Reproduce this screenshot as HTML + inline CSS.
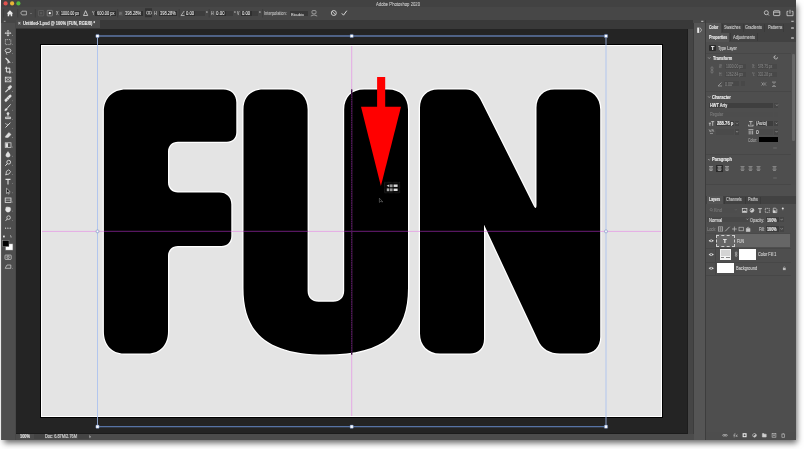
<!DOCTYPE html>
<html><head><meta charset="utf-8">
<style>
*{margin:0;padding:0;box-sizing:border-box}
html,body{width:804px;height:449px;overflow:hidden;background:#fff;font-family:"Liberation Sans",sans-serif}
.a{position:absolute}
.t{position:absolute;white-space:nowrap;will-change:transform}
svg{position:absolute;left:0;top:0}
</style></head><body>
<div class="a" style="left:1px;top:0;width:795px;height:440px;background:#474747;box-shadow:2px 4px 6px -1px rgba(0,0,0,.6)"></div>
<div class="a" style="left:1px;top:0px;width:795px;height:7.4px;background:#424242;"></div>
<div class="a" style="left:1px;top:6.9px;width:795px;height:0.6px;background:#383838;"></div>
<div class="t" style="left:376px;top:0.71px;font-size:108.0px;line-height:108.0px;color:#cfcfcf;font-weight:normal;-webkit-text-stroke:1.2px #cfcfcf;transform:scale(0.03897,0.05);transform-origin:0 0;">Adobe Photoshop 2020</div>
<div class="a" style="left:1px;top:7.4px;width:795px;height:12.1px;background:#474747;"></div>
<div class="a" style="left:16px;top:19.5px;width:677.6px;height:9.1px;background:#393939;"></div>
<div class="a" style="left:15.6px;top:20.1px;width:84.1px;height:8.4px;background:#4a4a4a;"></div>
<div class="t" style="left:18.2px;top:21.39px;font-size:92.0px;line-height:92.0px;color:#cfcfcf;font-weight:normal;-webkit-text-stroke:2.4px #cfcfcf;transform:scale(0.05000,0.05);transform-origin:0 0;">×</div>
<div class="t" style="left:23px;top:21.00px;font-size:96.0px;line-height:96.0px;color:#e6e6e6;font-weight:bold;-webkit-text-stroke:2.4px #e6e6e6;transform:scale(0.04159,0.05);transform-origin:0 0;">Untitled-1.psd @ 100% (FUN, RGB/8) *</div>
<div class="a" style="left:1px;top:19.5px;width:15px;height:420.5px;background:#4e4e4e;"></div>
<div class="a" style="left:1px;top:19.5px;width:0.7px;height:420.5px;background:#5a5a5a;"></div>
<div class="a" style="left:15.3px;top:19.5px;width:0.6px;height:420.5px;background:#474747;"></div>
<div class="a" style="left:1px;top:19.5px;width:14.5px;height:3.6px;background:#464646;"></div>
<div class="a" style="left:16px;top:28.6px;width:671.8px;height:405.1px;background:#242424;"></div>
<div class="a" style="left:16px;top:433.2px;width:671.8px;height:0.6px;background:#1c1c1c;"></div>
<div class="a" style="left:687.6px;top:28.6px;width:6px;height:411.4px;background:#454545;"></div>
<div class="a" style="left:686.7px;top:28.6px;width:0.9px;height:405px;background:#1d1d1d;"></div>
<div class="a" style="left:693.4px;top:28.6px;width:0.6px;height:411.4px;background:#3c3c3c;"></div>
<div class="a" style="left:16px;top:433.7px;width:677.6px;height:6.3px;background:#4c4c4c;"></div>
<div class="a" style="left:33.5px;top:434.4px;width:11px;height:5px;background:#444444;"></div>
<div class="a" style="left:77.5px;top:434.4px;width:11px;height:5px;background:#444444;"></div>
<div class="t" style="left:20px;top:434.49px;font-size:92.0px;line-height:92.0px;color:#e0e0e0;font-weight:bold;-webkit-text-stroke:2.4px #e0e0e0;transform:scale(0.04250,0.05);transform-origin:0 0;">100%</div>
<div class="t" style="left:45px;top:434.49px;font-size:92.0px;line-height:92.0px;color:#d6d6d6;font-weight:normal;-webkit-text-stroke:2.4px #d6d6d6;transform:scale(0.04257,0.05);transform-origin:0 0;">Doc: 6.87M/2.76M</div>
<div class="t" style="left:89px;top:433.06px;font-size:110.0px;line-height:110.0px;color:#cccccc;font-weight:normal;-webkit-text-stroke:2.4px #cccccc;transform:scale(0.05000,0.05);transform-origin:0 0;">&#x203A;</div>
<div class="a" style="left:693.6px;top:19.5px;width:11.6px;height:420.5px;background:#555555;"></div>
<div class="a" style="left:693.3px;top:19.5px;width:11.7px;height:3px;background:#484848;"></div>
<div class="a" style="left:693.8px;top:24.5px;width:10.7px;height:11px;background:#555555;"></div>
<div class="a" style="left:705.2px;top:19.5px;width:0.8px;height:420.5px;background:#3d3d3d;"></div>
<div class="a" style="left:706px;top:19.5px;width:90px;height:420.5px;background:#4e4e4e;"></div>
<div class="a" style="left:706px;top:19.5px;width:90px;height:3px;background:#484848;"></div>
<div class="a" style="left:706px;top:22.5px;width:90px;height:10px;background:#424242;"></div>
<div class="a" style="left:706.2px;top:22.5px;width:14.7px;height:10px;background:#535353;"></div>
<div class="a" style="left:721.7px;top:23.5px;width:0.6px;height:8px;background:#3a3a3a;"></div>
<div class="a" style="left:742.5px;top:23.5px;width:0.6px;height:8px;background:#3a3a3a;"></div>
<div class="a" style="left:764px;top:23.5px;width:0.6px;height:8px;background:#3a3a3a;"></div>
<div class="a" style="left:783.4px;top:23.5px;width:0.6px;height:8px;background:#3a3a3a;"></div>
<div class="t" style="left:708.7px;top:25.20px;font-size:96.0px;line-height:96.0px;color:#eeeeee;font-weight:bold;-webkit-text-stroke:2.4px #eeeeee;transform:scale(0.03710,0.05);transform-origin:0 0;">Color</div>
<div class="t" style="left:723.7px;top:25.20px;font-size:96.0px;line-height:96.0px;color:#c9c9c9;font-weight:normal;-webkit-text-stroke:2.4px #c9c9c9;transform:scale(0.03988,0.05);transform-origin:0 0;">Swatches</div>
<div class="t" style="left:745px;top:25.20px;font-size:96.0px;line-height:96.0px;color:#c9c9c9;font-weight:normal;-webkit-text-stroke:2.4px #c9c9c9;transform:scale(0.04085,0.05);transform-origin:0 0;">Gradients</div>
<div class="t" style="left:767.5px;top:25.20px;font-size:96.0px;line-height:96.0px;color:#c9c9c9;font-weight:normal;-webkit-text-stroke:2.4px #c9c9c9;transform:scale(0.04056,0.05);transform-origin:0 0;">Patterns</div>
<div class="a" style="left:706px;top:32.5px;width:90px;height:9.8px;background:#424242;"></div>
<div class="a" style="left:706.2px;top:33.3px;width:23.2px;height:9px;background:#535353;"></div>
<div class="a" style="left:729.6px;top:33.3px;width:0.6px;height:8px;background:#3a3a3a;"></div>
<div class="a" style="left:757px;top:33.3px;width:0.6px;height:8px;background:#3a3a3a;"></div>
<div class="t" style="left:708.7px;top:35.30px;font-size:96.0px;line-height:96.0px;color:#eeeeee;font-weight:bold;-webkit-text-stroke:2.4px #eeeeee;transform:scale(0.03854,0.05);transform-origin:0 0;">Properties</div>
<div class="t" style="left:732.5px;top:35.30px;font-size:96.0px;line-height:96.0px;color:#c9c9c9;font-weight:normal;-webkit-text-stroke:2.4px #c9c9c9;transform:scale(0.04184,0.05);transform-origin:0 0;">Adjustments</div>
<div class="a" style="left:790.8px;top:26.6px;width:3.2px;height:2px;background:#9a9a9a;border-radius:0.4px"></div>
<div class="a" style="left:790.8px;top:36.6px;width:3.2px;height:2px;background:#9a9a9a;border-radius:0.4px"></div>
<div class="a" style="left:790.8px;top:198.8px;width:3.2px;height:2px;background:#9a9a9a;border-radius:0.4px"></div>
<div class="a" style="left:709.3px;top:44.7px;width:6.7px;height:6px;background:#2c2c2c;border-radius:0.8px"></div>
<div class="t" style="left:710.6px;top:45.21px;font-size:108.0px;line-height:108.0px;color:#f0f0f0;font-weight:bold;-webkit-text-stroke:2.4px #f0f0f0;transform:scale(0.05000,0.05);transform-origin:0 0;">T</div>
<div class="t" style="left:718px;top:45.70px;font-size:96.0px;line-height:96.0px;color:#cfcfcf;font-weight:normal;-webkit-text-stroke:2.4px #cfcfcf;transform:scale(0.03958,0.05);transform-origin:0 0;">Type Layer</div>
<div class="a" style="left:706px;top:52.5px;width:85.5px;height:0.6px;background:#474747;"></div>
<div class="t" style="left:712.7px;top:55.70px;font-size:96.0px;line-height:96.0px;color:#eeeeee;font-weight:bold;-webkit-text-stroke:2.4px #eeeeee;transform:scale(0.04111,0.05);transform-origin:0 0;">Transform</div>
<div class="a" style="left:791.3px;top:53px;width:4.7px;height:131px;background:#4e4e4e;"></div>
<div class="a" style="left:792.3px;top:54px;width:2.7px;height:86.5px;background:#666666;border-radius:1.3px"></div>
<div class="t" style="left:718.7px;top:64.44px;font-size:90.0px;line-height:90.0px;color:#858585;font-weight:normal;-webkit-text-stroke:1.2px #858585;transform:scale(0.03046,0.05);transform-origin:0 0;">W:</div>
<div class="a" style="left:724.9px;top:64.3px;width:20.8px;height:4.7px;background:#484848;"></div>
<div class="t" style="left:725.8px;top:64.44px;font-size:90.0px;line-height:90.0px;color:#858585;font-weight:normal;-webkit-text-stroke:1.2px #858585;transform:scale(0.03817,0.05);transform-origin:0 0;">1000.00 px</div>
<div class="t" style="left:751.8px;top:64.44px;font-size:90.0px;line-height:90.0px;color:#858585;font-weight:normal;-webkit-text-stroke:1.2px #858585;transform:scale(0.03880,0.05);transform-origin:0 0;">X:</div>
<div class="a" style="left:757px;top:64.3px;width:20.3px;height:4.7px;background:#484848;"></div>
<div class="t" style="left:757.9px;top:64.44px;font-size:90.0px;line-height:90.0px;color:#858585;font-weight:normal;-webkit-text-stroke:1.2px #858585;transform:scale(0.03617,0.05);transform-origin:0 0;">578.75 px</div>
<div class="t" style="left:718.7px;top:72.44px;font-size:90.0px;line-height:90.0px;color:#858585;font-weight:normal;-webkit-text-stroke:1.2px #858585;transform:scale(0.03667,0.05);transform-origin:0 0;">H:</div>
<div class="a" style="left:724.9px;top:72.3px;width:20.8px;height:4.7px;background:#484848;"></div>
<div class="t" style="left:725.8px;top:72.44px;font-size:90.0px;line-height:90.0px;color:#858585;font-weight:normal;-webkit-text-stroke:1.2px #858585;transform:scale(0.03817,0.05);transform-origin:0 0;">1262.84 px</div>
<div class="t" style="left:751.8px;top:72.44px;font-size:90.0px;line-height:90.0px;color:#858585;font-weight:normal;-webkit-text-stroke:1.2px #858585;transform:scale(0.04121,0.05);transform-origin:0 0;">Y:</div>
<div class="a" style="left:757px;top:72.3px;width:20.3px;height:4.7px;background:#484848;"></div>
<div class="t" style="left:757.9px;top:72.44px;font-size:90.0px;line-height:90.0px;color:#858585;font-weight:normal;-webkit-text-stroke:1.2px #858585;transform:scale(0.03617,0.05);transform-origin:0 0;">302.28 px</div>
<div class="a" style="left:724.4px;top:81.3px;width:15.1px;height:5.2px;background:#484848;"></div>
<div class="t" style="left:725.3px;top:81.84px;font-size:90.0px;line-height:90.0px;color:#858585;font-weight:normal;-webkit-text-stroke:1.2px #858585;transform:scale(0.04025,0.05);transform-origin:0 0;">0.00°</div>
<div class="a" style="left:741.4px;top:81.3px;width:3.3px;height:5.2px;background:#484848;"></div>
<div class="a" style="left:706px;top:91px;width:85.3px;height:0.6px;background:#474747;"></div>
<div class="t" style="left:712.3px;top:94.70px;font-size:96.0px;line-height:96.0px;color:#eeeeee;font-weight:bold;-webkit-text-stroke:2.4px #eeeeee;transform:scale(0.04194,0.05);transform-origin:0 0;">Character</div>
<div class="a" style="left:708.7px;top:103.2px;width:64.3px;height:4.7px;background:#3f3f3f;"></div>
<div class="a" style="left:774.1px;top:103.2px;width:4.2px;height:4.7px;background:#464646;"></div>
<div class="t" style="left:709.7px;top:103.29px;font-size:92.0px;line-height:92.0px;color:#e8e8e8;font-weight:bold;-webkit-text-stroke:2.4px #e8e8e8;transform:scale(0.04162,0.05);transform-origin:0 0;">HWT Arty</div>
<div class="a" style="left:708.7px;top:111.5px;width:64.3px;height:5.3px;background:#4d4d4d;"></div>
<div class="a" style="left:774.1px;top:111.5px;width:4.2px;height:5.3px;background:#4d4d4d;"></div>
<div class="t" style="left:709.7px;top:111.89px;font-size:92.0px;line-height:92.0px;color:#7a7a7a;font-weight:normal;-webkit-text-stroke:2.4px #7a7a7a;transform:scale(0.04097,0.05);transform-origin:0 0;">Regular</div>
<div class="a" style="left:715.8px;top:121px;width:18.3px;height:5.2px;background:#3d3d3d;"></div>
<div class="a" style="left:734.9px;top:121px;width:3.9px;height:5.2px;background:#434343;"></div>
<div class="t" style="left:716.5px;top:121.39px;font-size:92.0px;line-height:92.0px;color:#eaeaea;font-weight:bold;-webkit-text-stroke:2.4px #eaeaea;transform:scale(0.04516,0.05);transform-origin:0 0;">288.76 p</div>
<div class="a" style="left:755.2px;top:120.8px;width:17.8px;height:5.2px;background:#3d3d3d;"></div>
<div class="a" style="left:774.1px;top:120.8px;width:4.2px;height:5.2px;background:#434343;"></div>
<div class="t" style="left:755.8px;top:121.19px;font-size:92.0px;line-height:92.0px;color:#dddddd;font-weight:normal;-webkit-text-stroke:2.4px #dddddd;transform:scale(0.04471,0.05);transform-origin:0 0;">(Auto)</div>
<div class="a" style="left:715.8px;top:129.4px;width:18.3px;height:5.2px;background:#4a4a4a;"></div>
<div class="a" style="left:734.9px;top:129.4px;width:3.9px;height:5.2px;background:#464646;"></div>
<div class="a" style="left:755.2px;top:129.4px;width:17.8px;height:5.2px;background:#4a4a4a;"></div>
<div class="a" style="left:774.1px;top:129.4px;width:4.2px;height:5.2px;background:#464646;"></div>
<div class="t" style="left:756.3px;top:129.79px;font-size:92.0px;line-height:92.0px;color:#dddddd;font-weight:normal;-webkit-text-stroke:2.4px #dddddd;transform:scale(0.05276,0.05);transform-origin:0 0;">0</div>
<div class="t" style="left:748.1px;top:137.59px;font-size:92.0px;line-height:92.0px;color:#9c9c9c;font-weight:normal;-webkit-text-stroke:2.4px #9c9c9c;transform:scale(0.03708,0.05);transform-origin:0 0;">Color:</div>
<div class="a" style="left:758.8px;top:136.9px;width:19.5px;height:5.3px;background:#000000;"></div>
<div class="a" style="left:772.6px;top:147.2px;width:4.8px;height:1.8px;background:#5c5c5c;border-radius:0.8px"></div>
<div class="a" style="left:706px;top:153.8px;width:85.3px;height:0.6px;background:#474747;"></div>
<div class="t" style="left:712.3px;top:157.40px;font-size:96.0px;line-height:96.0px;color:#eeeeee;font-weight:bold;-webkit-text-stroke:2.4px #eeeeee;transform:scale(0.04212,0.05);transform-origin:0 0;">Paragraph</div>
<div class="a" style="left:716.4px;top:165px;width:6.2px;height:6.8px;background:#383838;border-radius:0.6px;border:0.5px solid #2a2a2a"></div>
<div class="a" style="left:772.6px;top:177.2px;width:4.8px;height:1.8px;background:#5c5c5c;border-radius:0.8px"></div>
<div class="a" style="left:706px;top:184.2px;width:85.3px;height:0.6px;background:#474747;"></div>
<div class="a" style="left:706px;top:184.8px;width:90px;height:11px;background:#4f4f4f;"></div>
<div class="a" style="left:706px;top:195.9px;width:90px;height:8.4px;background:#424242;"></div>
<div class="a" style="left:706.5px;top:195.9px;width:16.6px;height:8.4px;background:#535353;"></div>
<div class="a" style="left:724.1px;top:196.6px;width:0.6px;height:7px;background:#3a3a3a;"></div>
<div class="a" style="left:744.7px;top:196.6px;width:0.6px;height:7px;background:#3a3a3a;"></div>
<div class="a" style="left:760.4px;top:196.6px;width:0.6px;height:7px;background:#3a3a3a;"></div>
<div class="t" style="left:708.9px;top:197.30px;font-size:96.0px;line-height:96.0px;color:#eeeeee;font-weight:bold;-webkit-text-stroke:2.4px #eeeeee;transform:scale(0.03650,0.05);transform-origin:0 0;">Layers</div>
<div class="t" style="left:726px;top:197.30px;font-size:96.0px;line-height:96.0px;color:#c9c9c9;font-weight:normal;-webkit-text-stroke:2.4px #c9c9c9;transform:scale(0.03871,0.05);transform-origin:0 0;">Channels</div>
<div class="t" style="left:747.6px;top:197.30px;font-size:96.0px;line-height:96.0px;color:#c9c9c9;font-weight:normal;-webkit-text-stroke:2.4px #c9c9c9;transform:scale(0.03992,0.05);transform-origin:0 0;">Paths</div>
<div class="a" style="left:708px;top:207.7px;width:29.3px;height:5.3px;background:#4d4d4d;"></div>
<div class="t" style="left:713.8px;top:208.14px;font-size:90.0px;line-height:90.0px;color:#7a7a7a;font-weight:normal;-webkit-text-stroke:2.4px #7a7a7a;transform:scale(0.04330,0.05);transform-origin:0 0;">Kind</div>
<div class="a" style="left:707.4px;top:217px;width:41.2px;height:5.4px;background:#484848;"></div>
<div class="t" style="left:708.9px;top:217.59px;font-size:92.0px;line-height:92.0px;color:#e0e0e0;font-weight:normal;-webkit-text-stroke:2.4px #e0e0e0;transform:scale(0.04452,0.05);transform-origin:0 0;">Normal</div>
<div class="t" style="left:749.9px;top:217.79px;font-size:92.0px;line-height:92.0px;color:#c4c4c4;font-weight:normal;-webkit-text-stroke:2.4px #c4c4c4;transform:scale(0.04208,0.05);transform-origin:0 0;">Opacity:</div>
<div class="a" style="left:766px;top:217.2px;width:12.8px;height:5.3px;background:#3c3c3c;"></div>
<div class="t" style="left:766.7px;top:217.59px;font-size:92.0px;line-height:92.0px;color:#f0f0f0;font-weight:bold;-webkit-text-stroke:2.4px #f0f0f0;transform:scale(0.04122,0.05);transform-origin:0 0;">100%</div>
<div class="a" style="left:779.8px;top:217.2px;width:3.9px;height:5.3px;background:#454545;"></div>
<div class="t" style="left:707.4px;top:226.59px;font-size:92.0px;line-height:92.0px;color:#808080;font-weight:normal;-webkit-text-stroke:2.4px #808080;transform:scale(0.04229,0.05);transform-origin:0 0;">Lock:</div>
<div class="t" style="left:758.7px;top:226.79px;font-size:92.0px;line-height:92.0px;color:#c4c4c4;font-weight:normal;-webkit-text-stroke:2.4px #c4c4c4;transform:scale(0.03774,0.05);transform-origin:0 0;">Fill:</div>
<div class="a" style="left:766px;top:226.4px;width:12.8px;height:5.3px;background:#3c3c3c;"></div>
<div class="t" style="left:766.7px;top:226.79px;font-size:92.0px;line-height:92.0px;color:#f0f0f0;font-weight:bold;-webkit-text-stroke:2.4px #f0f0f0;transform:scale(0.04122,0.05);transform-origin:0 0;">100%</div>
<div class="a" style="left:779.8px;top:226.4px;width:3.9px;height:5.3px;background:#454545;"></div>
<div class="a" style="left:706px;top:233.1px;width:85px;height:0.5px;background:#4a4a4a;"></div>
<div class="a" style="left:715.3px;top:234px;width:75px;height:12.8px;background:#666666;"></div>
<div class="a" style="left:716.3px;top:234.6px;width:18.3px;height:12.2px;background:transparent;border:0.7px dashed #d0d0d0"></div>
<div class="t" style="left:722.7px;top:237.72px;font-size:120.0px;line-height:120.0px;color:#eeeeee;font-weight:bold;-webkit-text-stroke:2.4px #eeeeee;transform:scale(0.05000,0.05);transform-origin:0 0;">T</div>
<div class="t" style="left:736.7px;top:239.19px;font-size:92.0px;line-height:92.0px;color:#d8d8d8;font-weight:normal;-webkit-text-stroke:2.4px #d8d8d8;transform:scale(0.03755,0.05);transform-origin:0 0;">FUN</div>
<div class="a" style="left:706px;top:248.2px;width:85px;height:0.5px;background:#474747;"></div>
<div class="a" style="left:720px;top:249px;width:10.6px;height:10.6px;background:#f4f4f4;"></div>
<div class="a" style="left:720.8px;top:249.8px;width:9px;height:5.8px;background:#d4d4d4;"></div>
<div class="a" style="left:720.8px;top:257.2px;width:3.6px;height:1px;background:#888888;"></div>
<div class="a" style="left:726.2px;top:257.2px;width:3.6px;height:1px;background:#888888;"></div>
<div class="a" style="left:738.7px;top:249.4px;width:17.4px;height:10.7px;background:#ffffff;"></div>
<div class="t" style="left:758.1px;top:252.49px;font-size:92.0px;line-height:92.0px;color:#cfcfcf;font-weight:normal;-webkit-text-stroke:2.4px #cfcfcf;transform:scale(0.04208,0.05);transform-origin:0 0;">Color Fill 1</div>
<div class="a" style="left:706px;top:261.6px;width:85px;height:0.5px;background:#474747;"></div>
<div class="a" style="left:717px;top:262.7px;width:17.1px;height:10.8px;background:#ffffff;"></div>
<div class="t" style="left:736.3px;top:266.09px;font-size:92.0px;line-height:92.0px;color:#cfcfcf;font-weight:normal;-webkit-text-stroke:2.4px #cfcfcf;transform:scale(0.04297,0.05);transform-origin:0 0;">Background</div>
<div class="a" style="left:715.3px;top:233.6px;width:0.5px;height:41px;background:#474747;"></div>
<div class="a" style="left:706px;top:274.6px;width:85px;height:0.5px;background:#474747;"></div>
<div class="a" style="left:706px;top:432px;width:90px;height:8px;background:#4d4d4d;"></div>
<div class="a" style="left:791px;top:204.5px;width:5px;height:227.5px;background:#4e4e4e;"></div>
<div class="t" style="left:55.5px;top:11.39px;font-size:92.0px;line-height:92.0px;color:#c0c0c0;font-weight:normal;-webkit-text-stroke:2.4px #c0c0c0;transform:scale(0.04073,0.05);transform-origin:0 0;">X</div>
<div class="a" style="left:60.1px;top:11.3px;width:19.800000000000004px;height:4.7px;background:#2f2f2f;"></div>
<div class="t" style="left:60.8px;top:11.39px;font-size:92.0px;line-height:92.0px;color:#f0f0f0;font-weight:normal;-webkit-text-stroke:1.0px #f0f0f0;transform:scale(0.03997,0.05);transform-origin:0 0;">1000.00 px</div>
<div class="t" style="left:91.6px;top:11.39px;font-size:92.0px;line-height:92.0px;color:#c0c0c0;font-weight:normal;-webkit-text-stroke:2.4px #c0c0c0;transform:scale(0.04073,0.05);transform-origin:0 0;">Y</div>
<div class="a" style="left:95.1px;top:11.3px;width:20.900000000000006px;height:4.7px;background:#2f2f2f;"></div>
<div class="t" style="left:96.5px;top:11.39px;font-size:92.0px;line-height:92.0px;color:#f0f0f0;font-weight:normal;-webkit-text-stroke:1.0px #f0f0f0;transform:scale(0.04330,0.05);transform-origin:0 0;">600.00 px</div>
<div class="a" style="left:119px;top:11.3px;width:3.7px;height:4.7px;background:#4e4e4e;"></div>
<div class="t" style="left:119.3px;top:11.49px;font-size:88.0px;line-height:88.0px;color:#8a8a8a;font-weight:normal;-webkit-text-stroke:2.4px #8a8a8a;transform:scale(0.03116,0.05);transform-origin:0 0;">W:</div>
<div class="a" style="left:124.6px;top:11.3px;width:18.30000000000001px;height:4.7px;background:#2f2f2f;"></div>
<div class="t" style="left:125.3px;top:11.39px;font-size:92.0px;line-height:92.0px;color:#f0f0f0;font-weight:normal;-webkit-text-stroke:1.0px #f0f0f0;transform:scale(0.04405,0.05);transform-origin:0 0;">398.28%</div>
<div class="t" style="left:154px;top:11.39px;font-size:92.0px;line-height:92.0px;color:#c0c0c0;font-weight:normal;-webkit-text-stroke:2.4px #c0c0c0;transform:scale(0.04213,0.05);transform-origin:0 0;">H</div>
<div class="a" style="left:159px;top:11.3px;width:17.900000000000006px;height:4.7px;background:#2f2f2f;"></div>
<div class="t" style="left:160px;top:11.39px;font-size:92.0px;line-height:92.0px;color:#f0f0f0;font-weight:normal;-webkit-text-stroke:1.0px #f0f0f0;transform:scale(0.04323,0.05);transform-origin:0 0;">398.28%</div>
<div class="a" style="left:185px;top:11.3px;width:19.5px;height:4.7px;background:#2f2f2f;"></div>
<div class="a" style="left:195px;top:11.3px;width:9.5px;height:4.7px;background:#3d3d3d;"></div>
<div class="t" style="left:186.2px;top:11.39px;font-size:92.0px;line-height:92.0px;color:#f0f0f0;font-weight:normal;-webkit-text-stroke:1.0px #f0f0f0;transform:scale(0.04579,0.05);transform-origin:0 0;">0.00</div>
<div class="t" style="left:205.6px;top:11.19px;font-size:92.0px;line-height:92.0px;color:#bbbbbb;font-weight:normal;-webkit-text-stroke:2.4px #bbbbbb;transform:scale(0.05000,0.05);transform-origin:0 0;">°</div>
<div class="t" style="left:211.1px;top:11.39px;font-size:92.0px;line-height:92.0px;color:#c0c0c0;font-weight:normal;-webkit-text-stroke:2.4px #c0c0c0;transform:scale(0.03913,0.05);transform-origin:0 0;">H</div>
<div class="a" style="left:215.7px;top:11.3px;width:16.80000000000001px;height:4.7px;background:#2f2f2f;"></div>
<div class="a" style="left:226px;top:11.3px;width:6.5px;height:4.7px;background:#3d3d3d;"></div>
<div class="t" style="left:216.4px;top:11.39px;font-size:92.0px;line-height:92.0px;color:#f0f0f0;font-weight:normal;-webkit-text-stroke:1.0px #f0f0f0;transform:scale(0.04803,0.05);transform-origin:0 0;">0.00</div>
<div class="t" style="left:233.6px;top:11.19px;font-size:92.0px;line-height:92.0px;color:#bbbbbb;font-weight:normal;-webkit-text-stroke:2.4px #bbbbbb;transform:scale(0.05000,0.05);transform-origin:0 0;">°</div>
<div class="t" style="left:237.3px;top:11.39px;font-size:92.0px;line-height:92.0px;color:#c0c0c0;font-weight:normal;-webkit-text-stroke:2.4px #c0c0c0;transform:scale(0.03910,0.05);transform-origin:0 0;">V</div>
<div class="a" style="left:241px;top:11.3px;width:17.19999999999999px;height:4.7px;background:#2f2f2f;"></div>
<div class="a" style="left:251.5px;top:11.3px;width:6.699999999999989px;height:4.7px;background:#3d3d3d;"></div>
<div class="t" style="left:242.2px;top:11.39px;font-size:92.0px;line-height:92.0px;color:#f0f0f0;font-weight:normal;-webkit-text-stroke:1.0px #f0f0f0;transform:scale(0.04579,0.05);transform-origin:0 0;">0.00</div>
<div class="t" style="left:259.2px;top:11.19px;font-size:92.0px;line-height:92.0px;color:#bbbbbb;font-weight:normal;-webkit-text-stroke:2.4px #bbbbbb;transform:scale(0.05000,0.05);transform-origin:0 0;">°</div>
<div class="t" style="left:263.7px;top:11.49px;font-size:92.0px;line-height:92.0px;color:#b8b8b8;font-weight:normal;-webkit-text-stroke:2.4px #b8b8b8;transform:scale(0.04286,0.05);transform-origin:0 0;">Interpolation:</div>
<div class="a" style="left:290.2px;top:11.1px;width:17.6px;height:5.2px;background:#383838;"></div>
<div class="t" style="left:291px;top:11.59px;font-size:88.0px;line-height:88.0px;color:#d0d0d0;font-weight:normal;-webkit-text-stroke:2.4px #d0d0d0;transform:scale(0.04583,0.05);transform-origin:0 0;">Bicubic</div>
<svg width="804" height="449" viewBox="0 0 804 449">
<circle cx="5.6" cy="3.4" r="2.1" fill="#e0534f"/><circle cx="12.1" cy="3.4" r="2.1" fill="#e9b536"/><circle cx="18.4" cy="3.4" r="2.1" fill="#55b93f"/>
<g fill="none" stroke="#3a3a3a" stroke-width="0.7"><line x1="3.6" y1="9" x2="3.6" y2="17.5"/><line x1="17.7" y1="9" x2="17.7" y2="17.5"/><line x1="35.3" y1="9" x2="35.3" y2="17.5"/><line x1="117.6" y1="9" x2="117.6" y2="17.5"/><line x1="179.2" y1="9" x2="179.2" y2="17.5"/><line x1="209.2" y1="9" x2="209.2" y2="17.5"/><line x1="262.6" y1="9" x2="262.6" y2="17.5"/></g>
<path d="M6.7,13.4 L9.95,10.2 L13.2,13.4 L12.2,13.4 L12.2,16.2 L10.7,16.2 L10.7,14.5 L9.2,14.5 L9.2,16.2 L7.7,16.2 L7.7,13.4 Z" fill="#e8e8e8"/>
<path d="M20.7,13 L22,11.2 L26.4,11.2 L26.4,14.9 L22,14.9 Z" fill="none" stroke="#d0d0d0" stroke-width="0.7"/><line x1="30" y1="13.5" x2="32" y2="13.5" stroke="#888" stroke-width="0.6"/>
<rect x="38.4" y="10.5" width="5.4" height="5.4" rx="0.8" fill="none" stroke="#6a6a6a" stroke-width="0.6"/><rect x="40" y="12.1" width="2.2" height="2.2" fill="#5a5a5a"/>
<rect x="47.2" y="10.4" width="5.2" height="5.5" rx="0.5" fill="none" stroke="#9a9a9a" stroke-width="0.6"/><circle cx="49.8" cy="13.2" r="1.1" fill="#ffffff"/>
<path d="M83.5,15.5 L85.6,10.7 L87.7,15.5 Z" fill="none" stroke="#dcdcdc" stroke-width="0.8"/>
<rect x="145" y="8.2" width="7" height="9" fill="#333333"/><path d="M146.6,12.8 a1.3,1.1 0 1,1 2.4,0 a1.3,1.1 0 1,0 2.4,0 a1.3,1.1 0 1,0 -2.4,0 a1.3,1.1 0 1,1 -2.4,0" fill="none" stroke="#cfcfcf" stroke-width="0.6"/>
<path d="M181,15.5 L184.2,11 M181,15.5 L184.5,15.5" stroke="#cfcfcf" stroke-width="0.7" fill="none"/>
<circle cx="333.8" cy="13" r="2.5" fill="none" stroke="#e6e6e6" stroke-width="0.8"/><line x1="332.1" y1="11.3" x2="335.5" y2="14.7" stroke="#e6e6e6" stroke-width="0.8"/>
<path d="M341.8,13.3 L343.5,15.2 L346.8,10.7" fill="none" stroke="#e8e8e8" stroke-width="0.9"/>
<g stroke="#cfcfcf" stroke-width="0.6" fill="none"><rect x="312" y="10.6" width="4" height="3.2" rx="0.8"/><path d="M310.8,16 Q314,13.8 317.2,16"/></g>
<g stroke="#d6d6d6" stroke-width="0.8" fill="none"><circle cx="766.3" cy="12.7" r="2"/><line x1="767.7" y1="14.1" x2="769" y2="15.5"/><rect x="773.6" y="10.8" width="6.2" height="4.8" rx="0.6"/><line x1="773.6" y1="12.2" x2="779.8" y2="12.2"/><path d="M788.4,11.3 L787,11.3 L787,15.7 L793,15.7 L793,11.3 L791.6,11.3"/><line x1="790" y1="9.8" x2="790" y2="13.6"/></g>
</svg>
<svg width="804" height="449" viewBox="0 0 804 449">
<g fill="none" stroke="#e0e0e0" stroke-width="0.8">
<line x1="3.8" y1="21.3" x2="5.6" y2="21.3" stroke="#bbb"/>
<path d="M8,30.5 L8,35.9 M5.3,33.2 L10.7,33.2" stroke-width="0.9"/>
<path d="M7,31.3 L8,30.3 L9,31.3 M7,35.1 L8,36.1 L9,35.1 M6.1,32.2 L5.1,33.2 L6.1,34.2 M9.9,32.2 L10.9,33.2 L9.9,34.2" stroke-width="0.7"/>
<rect x="5.4" y="39.6" width="5.4" height="5" stroke-dasharray="1,0.8" stroke-width="0.7"/>
<ellipse cx="8" cy="50.6" rx="2.9" ry="2" stroke-width="0.8"/><path d="M6.5,52.4 Q6,54 7,54.6"/>
<path d="M5.6,58 L8,60.5" stroke-width="1.3"/><path d="M7.8,59.6 L10.3,62.6 L8.6,62.4 L7.8,63.5 Z" fill="#e0e0e0" stroke-width="0.4"/>
<path d="M6.4,66.7 L6.4,72 L11.2,72 M4.9,68.2 L9.8,68.2 L9.8,73.6" stroke-width="1"/>
<rect x="5.3" y="77.2" width="5.6" height="4.6" stroke-width="0.8"/><path d="M5.3,77.2 L10.9,81.8 M10.9,77.2 L5.3,81.8" stroke-width="0.6"/>
<path d="M5.4,92.2 L9,88.6" stroke-width="1.2"/><path d="M7.8,87.6 L10.2,85.4 Q11.8,85.6 11.6,87 L9.6,89.6 Z" fill="#e0e0e0" stroke-width="0.6"/>
<path d="M5,99.6 L9.6,95 Q10.6,94.4 11.2,95.4 Q11.6,96.2 11,96.8 L6.4,101.4 Q5.6,102 5,101.2 Q4.5,100.4 5,99.6 Z" fill="#e6e6e6" stroke-width="0.4"/><path d="M6.6,98.6 L9,101 M8.2,97 L10.2,99" stroke="#4e4e4e" stroke-width="0.35"/>
<path d="M6,109.6 L10.6,104.4" stroke-width="1"/><path d="M4.8,110.8 Q4.6,108.8 6.2,108.4 Q7.4,108.6 7.2,109.6 Q6.6,110.8 4.8,110.8 Z" fill="#e6e6e6" stroke-width="0.4"/>
<path d="M8,113.2 L8,116.5 M5.5,117.2 L10.5,117.2 L10.5,118.6 L5.5,118.6 Z" stroke-width="0.9"/><circle cx="8" cy="113.6" r="1" fill="#e0e0e0"/>
<path d="M5.5,127.5 L10.4,122.7" stroke-width="1"/><path d="M5.2,123.4 Q6.2,124.5 7.8,124.4" stroke-width="0.7"/>
<path d="M5.4,136.5 L8.8,132.6 L11,134.4 L8.2,137.4 L5.6,137.4 Z" fill="#e0e0e0" stroke-width="0.5"/>
<rect x="5.2" y="142.8" width="5.8" height="4.6" stroke-width="0.7"/><rect x="5.6" y="143.2" width="2.4" height="3.8" fill="#e0e0e0" stroke="none"/>
<path d="M8,151.6 Q10.4,154.4 10.2,155.4 Q10,157.2 8,157.2 Q6,157.2 5.8,155.4 Q5.6,154.4 8,151.6 Z" fill="#e0e0e0" stroke-width="0.4"/>
<circle cx="8.7" cy="162.2" r="1.9" stroke-width="0.9"/><path d="M7.4,163.5 L5.3,165.8" stroke-width="1"/>
<path d="M6,175 L6.4,171.4 L8.8,169.8 L10.6,171.6 L9,174 L5.6,174.8 Z" stroke-width="0.8"/>
<path d="M5.5,179.4 L10.5,179.4 M8,179.4 L8,184.4" stroke-width="1.1"/>
<path d="M6.5,188.2 L10.2,191.8 L8.4,192 L9.2,193.8 L8.4,194.1 L7.6,192.4 L6.5,193.5 Z" fill="#1a1a1a" stroke-width="0.6"/>
<rect x="5.2" y="198" width="5.8" height="4.4" stroke-width="0.8"/><line x1="5.2" y1="200.2" x2="11" y2="200.2" stroke-width="0.5"/>
<path d="M5.8,208.6 L5.8,207.6 Q6.4,206.6 7.2,207.4 Q7.6,206.4 8.6,207.2 Q9.4,206.6 9.8,207.6 Q10.6,207.6 10.6,208.6 L10.6,210.2 Q10,212.2 8,212.2 Q6.4,212.2 5.4,210 Z" fill="#e6e6e6" stroke-width="0.4"/>
<circle cx="8.6" cy="217.6" r="1.8" stroke-width="0.8"/><line x1="7.3" y1="219" x2="5.6" y2="220.8" stroke-width="1"/>
<g fill="#e0e0e0" stroke="none"><circle cx="5.6" cy="228.2" r="0.6"/><circle cx="7.9" cy="228.2" r="0.6"/><circle cx="10.2" cy="228.2" r="0.6"/></g>
<rect x="3" y="235.6" width="1.8" height="1.8" fill="#e0e0e0" stroke="none"/><path d="M10,235.3 Q11.3,235.6 11.1,237.6" stroke-width="0.6"/>
</g>
<rect x="5.6" y="243.9" width="7.3" height="6.2" fill="#ffffff" stroke="#777" stroke-width="0.4"/>
<rect x="2.6" y="240.6" width="6.4" height="6.1" fill="#000000" stroke="#999" stroke-width="0.5"/>
<g fill="none" stroke="#d8d8d8" stroke-width="0.7"><rect x="5" y="255.1" width="6.2" height="4.3" rx="0.5"/><circle cx="8.1" cy="257.2" r="1.2"/>
<path d="M5.2,268.3 L7,265 L10.8,265 L10.8,268.3 Z" stroke-width="0.7"/></g>
<circle cx="12.4" cy="35.5" r="0.4" fill="#bbbbbb"/>
<circle cx="12.4" cy="44.6" r="0.4" fill="#bbbbbb"/>
<circle cx="12.4" cy="53.6" r="0.4" fill="#bbbbbb"/>
<circle cx="12.4" cy="62.6" r="0.4" fill="#bbbbbb"/>
<circle cx="12.4" cy="72.2" r="0.4" fill="#bbbbbb"/>
<circle cx="12.4" cy="91.5" r="0.4" fill="#bbbbbb"/>
<circle cx="12.4" cy="100.8" r="0.4" fill="#bbbbbb"/>
<circle cx="12.4" cy="110.2" r="0.4" fill="#bbbbbb"/>
<circle cx="12.4" cy="119.3" r="0.4" fill="#bbbbbb"/>
<circle cx="12.4" cy="128.4" r="0.4" fill="#bbbbbb"/>
<circle cx="12.4" cy="137.5" r="0.4" fill="#bbbbbb"/>
<circle cx="12.4" cy="147" r="0.4" fill="#bbbbbb"/>
<circle cx="12.4" cy="156.2" r="0.4" fill="#bbbbbb"/>
<circle cx="12.4" cy="165.2" r="0.4" fill="#bbbbbb"/>
<circle cx="12.4" cy="174.4" r="0.4" fill="#bbbbbb"/>
<circle cx="12.4" cy="183.7" r="0.4" fill="#bbbbbb"/>
<circle cx="12.4" cy="192.8" r="0.4" fill="#bbbbbb"/>
<circle cx="12.4" cy="202" r="0.4" fill="#bbbbbb"/>
<circle cx="12.4" cy="211.1" r="0.4" fill="#bbbbbb"/>
<circle cx="12.4" cy="220.3" r="0.4" fill="#bbbbbb"/>
<circle cx="12.4" cy="268.4" r="0.4" fill="#bbbbbb"/>
</svg>
<svg width="804" height="449" viewBox="0 0 804 449">
<rect x="40" y="44" width="623" height="374" fill="#000"/><rect x="41" y="45" width="621" height="372" fill="#fff"/><rect x="42" y="46" width="619" height="370" fill="#e4e4e4"/>
<g fill="#000" stroke="#fff" stroke-width="2.5" paint-order="stroke"><path d="M103.9,111.5 C103.9,98.3 112.7,89.5 125.9,89.5 L223.3,89.5 C231.1,89.5 236.3,94.7 236.3,102.5 L236.3,132.2 C236.3,137.9 232.5,141.7 226.8,141.7 L178.0,141.7 C172.0,141.7 168.0,145.7 168.0,151.7 L168.0,182.5 C168.0,188.5 172.0,192.5 178.0,192.5 L219.3,192.5 C226.5,192.5 231.3,197.3 231.3,204.5 L231.3,236.0 C231.3,242.0 227.3,246.0 221.3,246.0 L178.0,246.0 C172.0,246.0 168.0,250.0 168.0,256.0 L168.0,331.5 C168.0,344.7 160.0,353.5 148.0,353.5 L123.9,353.5 C111.9,353.5 103.9,344.7 103.9,331.5 Z"/><path d="M243.5,109.5 C243.5,97.1 251.1,89.5 263.5,89.5 L287.6,89.5 C300.0,89.5 307.6,97.1 307.6,109.5 L307.6,290.8 C307.6,297.6 311.8,301.8 318.6,301.8 L333.2,301.8 C340.0,301.8 344.2,297.6 344.2,290.8 L344.2,109.5 C344.2,97.1 351.8,89.5 364.2,89.5 L388.0,89.5 C400.4,89.5 408.0,97.1 408.0,109.5 L408.0,288 C408.0,332 385.5,354.5 325.75,354.5 C266,354.5 243.5,332 243.5,288 Z"/><path d="M420,107.5 C420,96.7 427.2,89.5 438,89.5 L466,89.5 C473,89.5 478,94 481.8,102.3 L533.5,205.5 C534.2,207 535,208 535.5,208 C536.2,208 536.5,207 536.5,205 L536.5,107.5 C536.5,96.7 543.7,89.5 554.5,89.5 L580.2,89.5 C592.2,89.5 600.2,97.5 600.2,109.5 L600.2,337 C600.2,347 593.8,353.5 584,353.5 L560,353.5 C550,353.5 542,349 538,340 L484.9,226.5 C484.6,225.5 484.3,225 484,225.5 L484,339 C484,347.9 478.4,353.5 470,353.5 L440,353.5 C428,353.5 420,345.5 420,333.5 Z"/></g>
<line x1="42" y1="231.4" x2="661" y2="231.4" stroke="#e592e5" stroke-width="0.7"/>
<line x1="351.7" y1="46" x2="351.7" y2="416" stroke="#e592e5" stroke-width="0.7"/>
<line x1="351.7" y1="89.5" x2="351.7" y2="354.5" stroke="#000" stroke-width="1.2"/><line x1="351.7" y1="89.5" x2="351.7" y2="354.5" stroke="#6c1c78" stroke-width="0.9" stroke-dasharray="1.7,0.6"/>
<line x1="104.2" y1="231.4" x2="231" y2="231.4" stroke="#000" stroke-width="1.3"/><line x1="104.2" y1="231.4" x2="231" y2="231.4" stroke="#6c1c78" stroke-width="0.9"/><line x1="243.8" y1="231.4" x2="307.3" y2="231.4" stroke="#000" stroke-width="1.3"/><line x1="243.8" y1="231.4" x2="307.3" y2="231.4" stroke="#6c1c78" stroke-width="0.9"/><line x1="344.5" y1="231.4" x2="407.7" y2="231.4" stroke="#000" stroke-width="1.3"/><line x1="344.5" y1="231.4" x2="407.7" y2="231.4" stroke="#6c1c78" stroke-width="0.9"/><line x1="420.3" y1="231.4" x2="483.7" y2="231.4" stroke="#000" stroke-width="1.3"/><line x1="420.3" y1="231.4" x2="483.7" y2="231.4" stroke="#6c1c78" stroke-width="0.9"/><line x1="487.8" y1="231.4" x2="599.9" y2="231.4" stroke="#000" stroke-width="1.3"/><line x1="487.8" y1="231.4" x2="599.9" y2="231.4" stroke="#6c1c78" stroke-width="0.9"/>
<rect x="97.5" y="36" width="508.5" height="390.7" fill="none" stroke="#a6bff0" stroke-width="0.8"/>
<line x1="97.5" y1="36" x2="606" y2="36" stroke="#43639e" stroke-width="0.8"/><line x1="97.5" y1="426.7" x2="606" y2="426.7" stroke="#43639e" stroke-width="0.8"/>

<rect x="95.9" y="34.4" width="3.2" height="3.2" rx="0.6" fill="#fff" stroke="#5a7ab8" stroke-width="0.5"/>
<rect x="350.09999999999997" y="34.4" width="3.2" height="3.2" rx="0.6" fill="#fff" stroke="#5a7ab8" stroke-width="0.5"/>
<rect x="604.4" y="34.4" width="3.2" height="3.2" rx="0.6" fill="#fff" stroke="#5a7ab8" stroke-width="0.5"/>
<rect x="96.2" y="230.1" width="2.6" height="2.6" rx="0.6" fill="#fff" stroke="#5a7ab8" stroke-width="0.5"/>
<rect x="604.7" y="230.1" width="2.6" height="2.6" rx="0.6" fill="#fff" stroke="#5a7ab8" stroke-width="0.5"/>
<rect x="95.9" y="425.09999999999997" width="3.2" height="3.2" rx="0.6" fill="#fff" stroke="#5a7ab8" stroke-width="0.5"/>
<rect x="350.09999999999997" y="425.09999999999997" width="3.2" height="3.2" rx="0.6" fill="#fff" stroke="#5a7ab8" stroke-width="0.5"/>
<rect x="604.4" y="425.09999999999997" width="3.2" height="3.2" rx="0.6" fill="#fff" stroke="#5a7ab8" stroke-width="0.5"/>
<rect x="377.1" y="77" width="8.1" height="30.5" fill="#ff0000"/><polygon points="361,106.8 401,106.8 380.9,185.9" fill="#ff0000"/>
<rect x="384.5" y="182.3" width="15.2" height="10.6" fill="#0a0a0a" stroke="#5a5a5a" stroke-width="0.45" stroke-dasharray="0.5,0.7"/>
<g fill="#cfcfcf"><path d="M386.6,185.8 L389.2,184.6 L389.2,187 Z"/><rect x="389.8" y="184.4" width="2.8" height="2.8" fill="#9a9a9a"/><rect x="393.6" y="184.5" width="4" height="2.4" fill="#dcdcdc"/><rect x="386.8" y="188.4" width="2.4" height="2.8" fill="#aaaaaa"/><rect x="389.8" y="188.4" width="2.8" height="2.8" fill="#9a9a9a"/><rect x="393.6" y="188.6" width="4" height="2.4" fill="#dcdcdc"/></g>
<path d="M379.4,198.2 L379.4,202.4 L380.5,201.5 L382.8,201.9 Z" fill="none" stroke="#888" stroke-width="0.5"/>
</svg>
<svg width="804" height="449" viewBox="0 0 804 449">
<g fill="none" stroke="#d0d0d0" stroke-width="0.6">
<rect x="697.2" y="27.6" width="2" height="5.3" fill="#e8e8e8" stroke="none"/><path d="M700,27.6 L701.6,30 L700,32.4" stroke-width="0.7"/>
<line x1="701.2" y1="21.3" x2="703.4" y2="21.3" stroke="#d8d8d8" stroke-width="0.9"/><line x1="791.3" y1="21.3" x2="793.7" y2="21.3" stroke="#d8d8d8" stroke-width="0.9"/>
<path d="M708.1,57.4 L709.2,58.5 L710.3,57.4 M708.1,96.4 L709.2,97.5 L710.3,96.4 M708.1,159.1 L709.2,160.2 L710.3,159.1" stroke="#c8c8c8" stroke-width="0.6"/>
<path d="M774.3,56.2 A1.8,1.8 0 1,0 777.6,57.3" stroke-width="0.7"/><path d="M775.8,55.5 L774.3,56.2 L775,57.7" stroke-width="0.6"/>
<ellipse cx="712" cy="68.3" rx="1" ry="1.6" stroke="#8a8a8a"/><ellipse cx="712" cy="71.6" rx="1" ry="1.6" stroke="#8a8a8a"/>
<path d="M718,86 L721.5,82.5 M718,86 L722,86" stroke="#aaa" stroke-width="0.7"/>
<path d="M761.5,82.5 L763,84 L761.5,85.5 M766,82.5 L764.5,84 L766,85.5" stroke="#bbb" stroke-width="0.6"/><line x1="763.8" y1="82" x2="763.8" y2="86" stroke="#bbb" stroke-width="0.4"/>
<path d="M772.3,82 L775.7,82 L774,83.5 Z M772.3,86.5 L775.7,86.5 L774,85 Z" stroke="#bbb" stroke-width="0.5"/>
<path d="M776,104.6 L776.9,105.6 L777.8,104.6 M736.2,122.7 L737.1,123.7 L738,122.7 M775.6,122.7 L776.5,123.7 L777.4,122.7 M736.2,131.2 L737.1,132.2 L738,131.2 M775.6,131.2 L776.5,132.2 L777.4,131.2 M780.6,219 L781.7,220.1 L782.8,219 M780.6,228.3 L781.7,229.4 L782.8,228.3 M746.5,218.7 L747.4,219.7 L748.3,218.7" stroke="#cfcfcf" stroke-width="0.5"/>
<path d="M708.8,123.2 L711,123.2 M709.9,123.2 L709.9,125.8 M711.2,121.6 L714.2,121.6 M712.7,121.6 L712.7,125.8" stroke="#e0e0e0" stroke-width="0.7"/>
<path d="M748.3,126 L753.3,126 M749,121.5 L752.6,121.5 M750.8,121.5 L750.8,124.8 M748.6,124.6 L748.6,126 M753,124.6 L753,126" stroke="#e0e0e0" stroke-width="0.65"/>
<path d="M709,129.4 L710.2,131.8 L711.4,129.4 M711.8,131.8 L712.8,129.4 L713.8,131.8 M710,133.4 L713,133.4" stroke="#c8c8c8" stroke-width="0.55"/>
<path d="M748.4,129.6 L753.4,129.6 M749.2,130.6 L749.2,134.4 M750.9,130.6 L750.9,134.4 M752.6,130.6 L752.6,134.4" stroke="#e0e0e0" stroke-width="0.65"/>
<g stroke="#d0d0d0" stroke-width="0.6"><line x1="709" y1="166.6" x2="713" y2="166.6"/><line x1="709.6" y1="167.9" x2="712.4" y2="167.9"/><line x1="709" y1="169.2" x2="713" y2="169.2"/><line x1="709.6" y1="170.5" x2="712.4" y2="170.5"/></g>
<g stroke="#d0d0d0" stroke-width="0.6"><line x1="717.5" y1="166.6" x2="721.5" y2="166.6"/><line x1="718.1" y1="167.9" x2="720.9" y2="167.9"/><line x1="717.5" y1="169.2" x2="721.5" y2="169.2"/><line x1="718.1" y1="170.5" x2="720.9" y2="170.5"/></g>
<g stroke="#d0d0d0" stroke-width="0.6"><line x1="725" y1="166.6" x2="729" y2="166.6"/><line x1="725.6" y1="167.9" x2="728.4" y2="167.9"/><line x1="725" y1="169.2" x2="729" y2="169.2"/><line x1="725.6" y1="170.5" x2="728.4" y2="170.5"/></g>
<g stroke="#b0b0b0" stroke-width="0.6"><line x1="740.5" y1="166.6" x2="744.5" y2="166.6"/><line x1="741.1" y1="167.9" x2="743.9" y2="167.9"/><line x1="740.5" y1="169.2" x2="744.5" y2="169.2"/><line x1="741.1" y1="170.5" x2="743.9" y2="170.5"/></g>
<g stroke="#b0b0b0" stroke-width="0.6"><line x1="748.5" y1="166.6" x2="752.5" y2="166.6"/><line x1="749.1" y1="167.9" x2="751.9" y2="167.9"/><line x1="748.5" y1="169.2" x2="752.5" y2="169.2"/><line x1="749.1" y1="170.5" x2="751.9" y2="170.5"/></g>
<g stroke="#b0b0b0" stroke-width="0.6"><line x1="756.5" y1="166.6" x2="760.5" y2="166.6"/><line x1="757.1" y1="167.9" x2="759.9" y2="167.9"/><line x1="756.5" y1="169.2" x2="760.5" y2="169.2"/><line x1="757.1" y1="170.5" x2="759.9" y2="170.5"/></g>
<g stroke="#b0b0b0" stroke-width="0.6"><line x1="772.5" y1="166.6" x2="776.5" y2="166.6"/><line x1="773.1" y1="167.9" x2="775.9" y2="167.9"/><line x1="772.5" y1="169.2" x2="776.5" y2="169.2"/><line x1="773.1" y1="170.5" x2="775.9" y2="170.5"/></g>
<circle cx="711.2" cy="209.7" r="1.2" stroke="#888" stroke-width="0.5"/><line x1="712" y1="210.5" x2="713" y2="211.5" stroke="#888" stroke-width="0.5"/>
<path d="M735,209.3 L735.8,210.2 L736.6,209.3" stroke="#777" stroke-width="0.5"/>
<g stroke="#d4d4d4" stroke-width="0.7"><rect x="742.3" y="208.4" width="4.6" height="3.8"/><path d="M742.6,212 Q744.6,209.8 746.6,212 Z" fill="#d4d4d4"/><circle cx="752" cy="210.3" r="1.9"/><path d="M753.3,209 A1.9,1.9 0 0,1 750.7,211.6 Z" fill="#d4d4d4"/><path d="M758.1,208.6 L761.9,208.6 M760,208.6 L760,212.2 M759,212.2 L761,212.2" stroke-width="0.8"/><path d="M765.3,208.4 L769.3,208.4 L769.3,212.4 L765.3,212.4 Z" stroke-dasharray="1.2,0.6"/><path d="M773.3,208.2 L775.6,208.2 L776.8,209.4 L776.8,212.6 L773.3,212.6 Z"/><rect x="773.2" y="210.8" width="2" height="1.8" fill="#d4d4d4"/></g>
<circle cx="782.8" cy="208.6" r="1" fill="#e0e0e0" stroke="none"/><line x1="782.8" y1="209.4" x2="782.8" y2="210.5" stroke="#aaa" stroke-width="0.4"/>
<g stroke="#c4c4c4" stroke-width="0.6"><rect x="718.4" y="226.9" width="4.3" height="4.2"/><path d="M718.4,229 L722.7,229 M720.55,226.9 L720.55,231.1" stroke-width="0.4"/><path d="M725.2,231.3 L729.6,226.8" stroke-width="0.8"/><path d="M734.4,226.6 L734.4,231.4 M732,229 L736.8,229" stroke-width="0.7"/><rect x="739" y="227.2" width="4.3" height="3.6"/><rect x="746.2" y="228.7" width="3.8" height="2.8" fill="#c4c4c4"/><path d="M747,228.7 L747,227.8 Q748.1,226.4 749.2,227.8 L749.2,228.7"/></g>
<path d="M708.9,240.8 Q711.2,238.70000000000002 713.5,240.8 Q711.2,242.9 708.9,240.8 Z" fill="#e8e8e8" stroke="#e8e8e8" stroke-width="0.45"/><circle cx="711.2" cy="240.8" r="0.8" fill="#4a4a4a" stroke="none"/>
<path d="M708.9,254.6 Q711.2,252.5 713.5,254.6 Q711.2,256.7 708.9,254.6 Z" fill="#e8e8e8" stroke="#e8e8e8" stroke-width="0.45"/><circle cx="711.2" cy="254.6" r="0.8" fill="#4a4a4a" stroke="none"/>
<path d="M708.9,268.3 Q711.2,266.2 713.5,268.3 Q711.2,270.40000000000003 708.9,268.3 Z" fill="#e8e8e8" stroke="#e8e8e8" stroke-width="0.45"/><circle cx="711.2" cy="268.3" r="0.8" fill="#4a4a4a" stroke="none"/>
<rect x="735.4" y="252" width="1.5" height="2" rx="0.6" stroke="#dcdcdc" stroke-width="0.55"/><rect x="735.4" y="254.4" width="1.5" height="2" rx="0.6" stroke="#dcdcdc" stroke-width="0.55"/>
<rect x="782.9" y="267.9" width="2.8" height="2.2" fill="#bbb" stroke="none"/><path d="M783.5,267.9 L783.5,267.2 Q784.3,266.3 785.1,267.2 L785.1,267.9" stroke="#bbb" stroke-width="0.5"/>
<g stroke="#c8c8c8" stroke-width="0.6"><ellipse cx="723.9" cy="435.3" rx="1.3" ry="0.85"/><ellipse cx="726.1" cy="435.3" rx="1.3" ry="0.85"/><path d="M734.2,437.4 L734.2,434.6 Q734.4,433.4 735.4,433.4 M733.5,435.3 L735.2,435.3 M735.8,434.6 L737.4,437 M737.4,434.6 L735.8,437" stroke-width="0.55"/><path d="M754.5,433.5 A1.8,1.8 0 1,0 754.51,433.5" stroke-width="0.7"/><path d="M762.4,433.6 L764,433.6 L764.6,434.2 L766.2,434.2 L766.2,437 L762.4,437 Z" fill="#d0d0d0"/><rect x="772.1" y="433.3" width="3.8" height="3.9"/><path d="M774,434.2 L774,436.3 M773,435.25 L775,435.25" stroke-width="0.5"/><path d="M781.9,434.6 L781.9,437.4 L784.5,437.4 L784.5,434.6 M781.3,434.2 L785.1,434.2 M782.6,433.5 L783.8,433.5"/></g>
<rect x="742.6" y="433.2" width="4" height="4" fill="#e8e8e8" stroke="none"/><circle cx="744.6" cy="435.2" r="1.05" fill="#4e4e4e" stroke="none"/><path d="M755.8,434 A1.8,1.8 0 0,1 753.2,436.6 Z" fill="#c8c8c8" stroke="none"/>
</g></svg>
</body></html>
